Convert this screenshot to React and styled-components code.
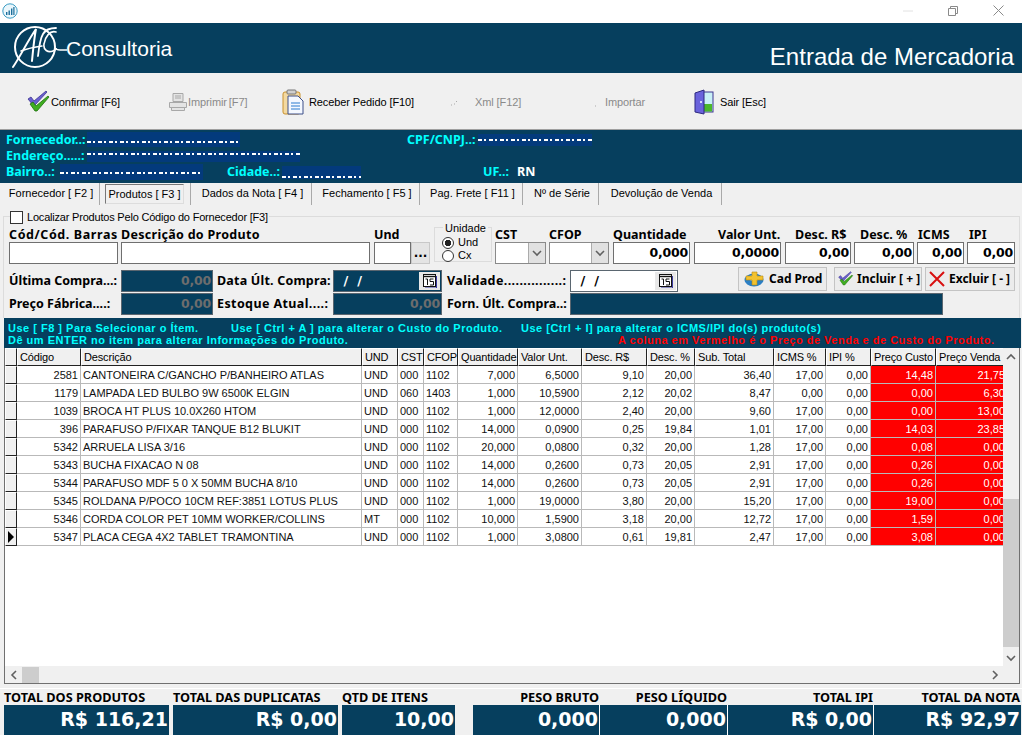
import React from 'react';
import styled, { createGlobalStyle } from 'styled-components';

const NAVY = '#063f5e';
const GRID_COLS = '12px 64px 281px 36px 26px 34px 60px 64px 65px 48px 79px 52px 45px 65px 72px';

const Global = createGlobalStyle`
  html, body { margin: 0; padding: 0; background: #f0f0f0; }
  body { width: 1022px; height: 735px; overflow: hidden; font-family: "Liberation Sans", Arial, sans-serif; }
  * { box-sizing: border-box; }
`;

const Window = styled.div`
  width: 1022px;
  height: 735px;
  display: flex;
  flex-direction: column;
  overflow: hidden;
  & > * { flex: none; }
`;

const TitleBar = styled.div`
  height: 23px;
  background: #fff;
  display: flex;
  align-items: center;
  padding: 0 18px 2px 2px;
`;
const WinButtons = styled.div`
  margin-left: auto;
  display: flex;
  align-items: center;
  gap: 35px;
  color: #999;
`;

const Banner = styled.div`
  height: 50px;
  background: ${NAVY};
  display: flex;
  color: #fff;
  padding: 0 8px 0 11px;
`;
const Brand = styled.div`
  display: flex;
  align-items: flex-start;
  padding-top: 1px;
  font-size: 21px;
  line-height: 49px;
`;
const BrandName = styled.span`
  margin-left: -1px;
`;
const ScreenTitle = styled.div`
  margin-left: auto;
  font-size: 24px;
  line-height: 67px;
`;

const Toolbar = styled.div`
  height: 57px;
  background: #f0f0f0;
  border-bottom: 1px solid #a0a0a0;
  display: grid;
  grid-template-columns: 141px 114px 168px 145px 99px 1fr;
  padding: 2px 0 0 27px;
  align-items: center;
  font-size: 11px;
`;
const ToolButton = styled.div`
  display: flex;
  align-items: center;
  gap: ${p => p.$gap || 0}px;
  color: ${p => (p.$off ? '#8a8a8a' : '#000')};
  letter-spacing: -0.1px;
  word-spacing: ${p => p.$ws || 0}px;
  white-space: pre;
`;

const Supplier = styled.div`
  height: 53px;
  background: ${NAVY};
  padding: 1px 0 0 6px;
  font: bold 12.5px/16px "Noto Sans", Verdana, sans-serif;
  color: #00ffff;
`;
const SupplierRow = styled.div`
  display: flex;
  align-items: center;
  height: ${p => p.$h || 16}px;
  white-space: pre;
`;
const SupLabel = styled.span`
  width: ${p => p.$w}px;
  flex: none;
`;
const Hidden = styled.span`
  flex: none;
  width: ${p => p.$w}px;
  height: ${p => p.$h || 12}px;
  margin-right: ${p => p.$mr || 0}px;
  background-color: #033a7c;
  background-image: repeating-linear-gradient(90deg, #fff 0 4px, transparent 4px 6px, #fff 6px 8px, transparent 8px 11px);
  background-size: 100% 2px;
  background-repeat: no-repeat;
  background-position: 0 ${p => p.$line || 6}px;
`;
const Plain = styled.span`
  color: #fff;
`;

const Tabs = styled.div`
  height: 22px;
  background: #f0f0f0;
  display: flex;
  font-size: 11px;
  color: #000;
`;
const Tab = styled.div`
  width: ${p => p.$w}px;
  display: flex;
  align-items: center;
  justify-content: center;
  padding: 0 0 3px ${p => p.$pl ?? 3}px;
  border-right: 1px solid #a9a9a9;
  white-space: pre;
`;
const ActiveBox = styled.span`
  height: 20px;
  width: 79px;
  margin: 2px 0 0 -1px;
  display: flex;
  align-items: center;
  justify-content: center;
  border: 1px solid;
  border-color: #777 #ddd #ddd #777;
  background: #f0f0f0;
`;

const FormArea = styled.div`
  height: 113px;
  background: #f0f0f0;
  padding: 11px 2px 0 3px;
`;
const FormBox = styled.div`
  height: 102px;
  border: 1px solid #dcdcdc;
  border-bottom: 0;
  padding: 0 0 0 5px;
  position: relative;
`;
const Finder = styled.label`
  position: absolute;
  left: 6px;
  top: -6px;
  display: flex;
  align-items: center;
  gap: 4px;
  background: #f0f0f0;
  font-size: 11px;
  line-height: 13px;
  padding-right: 1px;
  letter-spacing: -0.2px;
`;
const CheckBox = styled.span`
  width: 13px;
  height: 13px;
  background: #fff;
  border: 1px solid #333;
`;

const bold = `font: bold 12.5px/14px "Noto Sans", Verdana, sans-serif;`;

const FieldRow = styled.div`
  display: flex;
  align-items: flex-end;
  height: 47px;
`;
const Field = styled.div`
  width: ${p => p.$w}px;
  margin-right: ${p => p.$mr ?? 3}px;
  flex: none;
`;
const FieldLabel = styled.div`
  ${bold}
  line-height: 16px;
  height: 15px;
  white-space: pre;
  padding-left: ${p => p.$pl || 0}px;
  letter-spacing: ${p => p.$ls || 0}px;
`;
const Input = styled.div`
  height: 22px;
  background: #fff;
  border: 1px solid #6f6f6f;
  font: bold 12.5px/20px "DejaVu Sans", Verdana, sans-serif;
  text-align: right;
  padding-right: 1px;
  letter-spacing: -0.2px;
`;
const DotsButton = styled.div`
  width: 19px;
  height: 22px;
  margin-right: 4px;
  flex: none;
  background: #e4e4e4;
  border: 1px solid #c8c8c8;
  font: bold 12px/20px "DejaVu Sans", sans-serif;
  text-align: center;
`;
const UnitBox = styled.div`
  position: relative;
  width: 58px;
  height: 35px;
  margin: 0 3px 2px 0;
  flex: none;
  border: 1px solid #dcdcdc;
  font-size: 11px;
  padding: 8px 0 0 7px;
`;
const UnitTitle = styled.span`
  position: absolute;
  top: -6px;
  left: 8px;
  background: #f0f0f0;
  padding: 0 2px;
  line-height: 12px;
`;
const Radio = styled.div`
  display: flex;
  align-items: center;
  gap: 4px;
  height: 13px;
  line-height: 13px;
`;
const RadioDot = styled.span`
  width: 12px;
  height: 12px;
  border-radius: 50%;
  border: 1px solid #333;
  background: ${p => (p.$on ? 'radial-gradient(circle, #222 0 3px, #fff 3.5px)' : '#fff')};
`;
const Combo = styled.div`
  height: 22px;
  background: #fff;
  border: 1px solid #8a8a8a;
  display: flex;
  justify-content: flex-end;
`;
const ComboArrow = styled.span`
  width: 17px;
  background: #e1e1e1;
  border-left: 1px solid #ababab;
  display: flex;
  align-items: center;
  justify-content: center;
`;

const Row2 = styled.div`
  display: flex;
  align-items: flex-start;
  height: 23px;
  margin-top: ${p => p.$mt || 0}px;
`;
const RowLabel = styled.div`
  ${bold}
  line-height: 22px;
  width: ${p => p.$w}px;
  padding-left: ${p => p.$pl || 0}px;
  letter-spacing: ${p => p.$ls || 0}px;
  flex: none;
  white-space: pre;
`;
const DarkInput = styled.div`
  width: ${p => p.$w}px;
  height: 22px;
  flex: none;
  background: ${NAVY};
  border: 1px solid #5a6670;
  color: #6d6d6d;
  font: bold 12.5px/20px "DejaVu Sans", Verdana, sans-serif;
  text-align: right;
  padding-right: 1px;
  letter-spacing: -0.2px;
`;
const DateInput = styled.div`
  width: ${p => p.$w}px;
  height: 22px;
  flex: none;
  background: ${p => (p.$dark ? NAVY : '#fff')};
  color: ${p => (p.$dark ? '#fff' : '#000')};
  border: 1px solid #5a6670;
  display: flex;
  align-items: center;
  padding: 0 0 0 5px;
  font: bold 13px/20px "DejaVu Sans", sans-serif;
  white-space: pre;
`;
const CalButton = styled.span`
  margin-left: auto;
  margin-right: 1px;
  width: 21px;
  height: 18px;
  background: #e8e8e8;
  display: flex;
  align-items: center;
  justify-content: center;
`;
const Spacer = styled.span`
  width: ${p => p.$w}px;
  flex: none;
`;
const ActionButton = styled.div`
  width: ${p => p.$w}px;
  height: 24px;
  margin: -3px ${p => p.$mr ?? 3}px 0 0;
  flex: none;
  background: #ececec;
  border: 1px solid #c4c4c4;
  display: flex;
  align-items: center;
  padding-left: ${p => p.$pl || 0}px;
  gap: ${p => p.$gap || 5}px;
  ${bold}
  font-size: 12px;
  white-space: pre;
`;

const Hints = styled.div`
  height: 30px;
  margin: 0 1px 0 4px;
  background: ${NAVY};
  color: #00ffff;
  font: bold 11px/13px "Liberation Sans", Arial, sans-serif;
  padding: 4px 0 0 4px;
  letter-spacing: 0.5px;
  white-space: pre;
`;
const HintRow = styled.div`
  display: flex;
  height: 12px;
`;
const Hint = styled.span`
  width: ${p => p.$w}px;
  flex: none;
  color: ${p => p.$color || 'inherit'};
`;

const GridWrap = styled.div`
  height: 336px;
  margin: 0 2px 0 4px;
  border: 1px solid #707070;
  border-top: 0;
  background: #fff;
  display: flex;
  flex-direction: column;
`;
const GridBody = styled.div`
  flex: 1;
  display: flex;
  min-height: 0;
`;
const GridMain = styled.div`
  width: 998px;
  flex: none;
  overflow: hidden;
`;
const Row = styled.div`
  display: grid;
  grid-template-columns: ${GRID_COLS};
  height: 18px;
`;
const HeadCell = styled.div`
  background: #f0f0f0;
  border-top: 1px solid #fff;
  border-left: 1px solid #fff;
  border-right: 1px solid #222;
  border-bottom: 1px solid #222;
  font-size: 11px;
  line-height: 17px;
  padding-left: 2px;
  white-space: nowrap;
  overflow: hidden;
  letter-spacing: -0.15px;
`;
const Indicator = styled.div`
  background: #f0f0f0;
  border-top: 1px solid #fff;
  border-left: 1px solid #fff;
  border-right: 1px solid #222;
  border-bottom: 1px solid #222;
  display: flex;
  align-items: center;
  justify-content: center;
`;
const Cell = styled.div`
  border-right: 1px solid #b9b9b9;
  border-bottom: 1px solid #b9b9b9;
  background: ${p => (p.$red ? '#ff0000' : '#fff')};
  color: ${p => (p.$red ? '#fff' : '#111')};
  font-size: 11px;
  line-height: 19px;
  padding: 0 2px;
  text-align: ${p => (p.$left ? 'left' : 'right')};
  white-space: nowrap;
  overflow: hidden;
`;
const VScroll = styled.div`
  width: 16px;
  flex: none;
  background: #f0f0f0;
  display: flex;
  flex-direction: column;
  align-items: center;
`;
const ScrollEnd = styled.span`
  height: 17px;
  width: ${p => p.$w || 16}px;
  margin-left: ${p => (p.$end ? 'auto' : 0)};
  flex: none;
  display: flex;
  align-items: center;
  justify-content: center;
`;
const VTrack = styled.div`
  flex: 1;
  width: 100%;
  display: flex;
  flex-direction: column;
  justify-content: flex-end;
`;
const VThumb = styled.div`
  height: 148px;
  margin-bottom: 2px;
  background: #cdcdcd;
`;
const HScroll = styled.div`
  height: 17px;
  background: #f0f0f0;
  display: flex;
  align-items: center;
  padding-right: 16px;
`;
const HThumb = styled.div`
  width: 17px;
  height: 16px;
  background: #cdcdcd;
`;

const Totals = styled.div`
  height: 47px;
  margin-top: 4px;
  background: #f0f0f0;
  border-top: 1px solid #fff;
  display: grid;
  grid-template-columns: 169px 169px 117px 14px 127px 128px 146px 147px;
  padding-left: 4px;
`;
const TotalCol = styled.div`
  margin-right: ${p => p.$mr ?? 4}px;
  display: flex;
  flex-direction: column;
`;
const TotalLabel = styled.div`
  ${bold}
  font-size: 12.7px;
  height: 16px;
  line-height: 16px;
  text-align: ${p => (p.$right ? 'right' : 'left')};
  white-space: nowrap;
  padding-right: ${p => (p.$right ? 1 : 0)}px;
`;
const TotalValue = styled.div`
  height: 30px;
  background: ${NAVY};
  color: #fff;
  font: bold 19px/28px "DejaVu Sans", Verdana, sans-serif;
  text-align: right;
  white-space: nowrap;
  padding-right: 1px;
  border-right: ${p => (p.$sep ? '1px solid #fff' : '0')};
`;

const rows = [
  ['2581', 'CANTONEIRA C/GANCHO P/BANHEIRO ATLAS', 'UND', '000', '1102', '7,000', '6,5000', '9,10', '20,00', '36,40', '17,00', '0,00', '14,48', '21,75'],
  ['1179', 'LAMPADA LED BULBO 9W 6500K ELGIN', 'UND', '060', '1403', '1,000', '10,5900', '2,12', '20,02', '8,47', '0,00', '0,00', '0,00', '6,30'],
  ['1039', 'BROCA HT PLUS 10.0X260 HTOM', 'UND', '000', '1102', '1,000', '12,0000', '2,40', '20,00', '9,60', '17,00', '0,00', '0,00', '13,00'],
  ['396', 'PARAFUSO P/FIXAR TANQUE B12  BLUKIT', 'UND', '000', '1102', '14,000', '0,0900', '0,25', '19,84', '1,01', '17,00', '0,00', '14,03', '23,85'],
  ['5342', 'ARRUELA LISA 3/16', 'UND', '000', '1102', '20,000', '0,0800', '0,32', '20,00', '1,28', '17,00', '0,00', '0,08', '0,00'],
  ['5343', 'BUCHA FIXACAO N 08', 'UND', '000', '1102', '14,000', '0,2600', '0,73', '20,05', '2,91', '17,00', '0,00', '0,26', '0,00'],
  ['5344', 'PARAFUSO MDF 5 0 X 50MM BUCHA 8/10', 'UND', '000', '1102', '14,000', '0,2600', '0,73', '20,05', '2,91', '17,00', '0,00', '0,26', '0,00'],
  ['5345', 'ROLDANA P/POCO 10CM REF:3851 LOTUS PLUS', 'UND', '000', '1102', '1,000', '19,0000', '3,80', '20,00', '15,20', '17,00', '0,00', '19,00', '0,00'],
  ['5346', 'CORDA COLOR PET 10MM WORKER/COLLINS', 'MT', '000', '1102', '10,000', '1,5900', '3,18', '20,00', '12,72', '17,00', '0,00', '1,59', '0,00'],
  ['5347', 'PLACA CEGA 4X2 TABLET TRAMONTINA', 'UND', '000', '1102', '1,000', '3,0800', '0,61', '19,81', '2,47', '17,00', '0,00', '3,08', '0,00'],
];
const heads = ['Código', 'Descrição', 'UND', 'CST', 'CFOP', 'Quantidade', 'Valor Unt.', 'Desc. R$', 'Desc. %', 'Sub. Total', 'ICMS %', 'IPI %', 'Preço Custo', 'Preço Venda'];

const Check = ({ size = 24 }) => (
  <svg width={size} height={size} viewBox="0 0 24 24">
    <path d="M1 9l3-2 3 4L19 1l1 1L8 15H6z" fill="#6a5fd0" stroke="#3c3590" strokeWidth="0.8" />
    <path d="M3 14l3-2 3 4L21 6l1 1L10 21H8z" fill="#3fae20" stroke="#1f6f10" strokeWidth="0.8" />
  </svg>
);

const PrinterIcon = () => (
  <svg width="20" height="20" viewBox="0 0 20 20" fill="#e4e4e4" stroke="#a8a8a8">
    <path d="M5 1.5h10v8H5z" />
    <path d="M7 4h6M7 6h6" />
    <path d="M1.5 10.5h17v5h-17z" />
    <path d="M3.5 15.5h13v3h-13z" />
  </svg>
);

const ClipboardIcon = () => (
  <svg width="22" height="26" viewBox="0 0 22 26">
    <rect x="1" y="3" width="17" height="22" rx="2" fill="#f3d9a0" stroke="#c9912c" />
    <rect x="5" y="1" width="9" height="4" rx="1" fill="#cfcfcf" stroke="#777" />
    <path d="M6 7h10l5 5v13H6z" fill="#f4f8ff" stroke="#3d4f88" />
    <path d="M9 14h9M9 17h9M9 20h9" stroke="#6ea4e0" strokeWidth="1.5" />
  </svg>
);

const DoorIcon = () => (
  <svg width="20" height="26" viewBox="0 0 20 26">
    <rect x="6" y="3" width="13" height="20" fill="#c9f0f6" stroke="#3c3590" />
    <rect x="7" y="15" width="11" height="7.5" fill="#4bb82a" />
    <path d="M1 4l9-3v24l-9-2z" fill="#6a63dc" stroke="#2d2880" />
    <circle cx="7" cy="13" r="1" fill="#fff" />
  </svg>
);

const LogoMark = () => (
  <svg width="56" height="46" viewBox="0 0 56 46" fill="none" stroke="#fff" strokeLinecap="round">
    <circle cx="24" cy="23" r="20" strokeWidth="2" />
    <path d="M2 43C9 33 16 18 25 5c-2 10-3 22-4 32" strokeWidth="2" />
    <path d="M10 27c8-3 14-4 21-5" strokeWidth="1.5" />
    <path d="M27 32c1-9 2-17 5-22 3-5 8-6 13-6" strokeWidth="1.8" />
    <path d="M45 8C39 6 34 13 33 20c-1 6 4 9 9 7 3-1 3-3 3-3 0 2 2 2 4 2h7" strokeWidth="1.6" />
  </svg>
);

const CalIcon = () => (
  <svg width="14" height="14" viewBox="0 0 14 14">
    <rect x="0.5" y="0.5" width="12" height="12" fill="#fff" stroke="#111" />
    <path d="M1 2.5h11" stroke="#111" strokeWidth="1.4" />
    <path d="M2.5 5h2v6M7 5h3.5M7 5v2.5h3.5V11H7" stroke="#111" fill="none" />
    <path d="M13.5 2v12H2" stroke="#3b3ba0" fill="none" />
  </svg>
);

const Chevron = ({ dir = 'down', color = '#606060' }) => {
  const paths = {
    down: 'M1 3l4 4 4-4',
    up: 'M1 7l4-4 4 4',
    left: 'M7 1L3 5l4 4',
    right: 'M3 1l4 4-4 4',
  };
  return (
    <svg width="10" height="10" viewBox="0 0 10 10">
      <path d={paths[dir]} fill="none" stroke={color} strokeWidth="1.6" />
    </svg>
  );
};

export default function App() {
  return (
    <Window>
      <Global />
      <TitleBar>
        <svg width="16" height="16" viewBox="0 0 16 16">
          <circle cx="8" cy="8" r="7.2" fill="#eaf6fb" stroke="#3a9cc4" />
          <path d="M4 12V9h1.4v3zM6.5 12V7.5h1.4V12zM9 12V5.5h1.4V12zM11.3 12V4h1.2v8z" fill="#1c6f9c" />
        </svg>
        <WinButtons>
          <svg width="10" height="10" viewBox="0 0 10 10">
            <path d="M0 5h10" stroke="#e2e2e2" />
          </svg>
          <svg width="10" height="10" viewBox="0 0 10 10" fill="none" stroke="#8a8a8a">
            <path d="M.5 2.5h7v7h-7zM2.5 2.5v-2h7v7h-2" />
          </svg>
          <svg width="11" height="11" viewBox="0 0 11 11" stroke="#8a8a8a">
            <path d="M.5.5l10 10M10.5.5l-10 10" />
          </svg>
        </WinButtons>
      </TitleBar>

      <Banner>
        <Brand>
          <LogoMark />
          <BrandName>Consultoria</BrandName>
        </Brand>
        <ScreenTitle>Entrada de Mercadoria</ScreenTitle>
      </Banner>

      <Toolbar>
        <ToolButton><Check />Confirmar [F6]</ToolButton>
        <ToolButton $off $ws={-2}><PrinterIcon />Imprimir  [F7]</ToolButton>
        <ToolButton $gap={5}><ClipboardIcon />Receber Pedido [F10]</ToolButton>
        <ToolButton $off $gap={16}><svg width="9" height="9" viewBox="0 0 9 9"><path d="M1 7h1M4 6h1M6 4l1-1" stroke="#aaa" /></svg>Xml [F12]</ToolButton>
        <ToolButton $off $gap={8}><svg width="2" height="9" viewBox="0 0 2 9"><path d="M0 8h1" stroke="#aaa" /></svg>Importar</ToolButton>
        <ToolButton $gap={6}><DoorIcon />Sair [Esc]</ToolButton>
      </Toolbar>

      <Supplier>
        <SupplierRow $h={17}>
          <SupLabel $w={81}>Fornecedor..:</SupLabel>
          <Hidden $w={153} $h={15} $line={9} $mr={167} />
          <SupLabel $w={71}>CPF/CNPJ..:</SupLabel>
          <Hidden $w={114} $h={12} $line={5} />
        </SupplierRow>
        <SupplierRow>
          <SupLabel $w={81}>Endereço.....:</SupLabel>
          <Hidden $w={213} $h={11} $line={2} />
        </SupplierRow>
        <SupplierRow>
          <SupLabel $w={54}>Bairro..:</SupLabel>
          <Hidden $w={143} $h={16} $line={8} $mr={24} />
          <SupLabel $w={55}>Cidade..:</SupLabel>
          <Hidden $w={79} $h={13} $line={10} $mr={122} />
          <SupLabel $w={34}>UF..:</SupLabel>
          <Plain>RN</Plain>
        </SupplierRow>
      </Supplier>

      <Tabs>
        <Tab $w={100}>Fornecedor [ F2 ]</Tab>
        <Tab $w={91} $pl={0}><ActiveBox>Produtos [ F3 ]</ActiveBox></Tab>
        <Tab $w={121}>Dados da Nota [ F4 ]</Tab>
        <Tab $w={108}>Fechamento [ F5 ]</Tab>
        <Tab $w={103}>Pag. Frete [ F11 ]</Tab>
        <Tab $w={76}>Nº de Série</Tab>
        <Tab $w={123}>Devolução de Venda</Tab>
      </Tabs>

      <FormArea>
        <FormBox>
          <Finder><CheckBox />Localizar Produtos Pelo Código do Fornecedor [F3]</Finder>
          <FieldRow>
            <Field $w={109}><FieldLabel $ls={0.6}>Cód/Cód. Barras</FieldLabel><Input /></Field>
            <Field $w={249} $mr={4}><FieldLabel $ls={0.3}>Descrição do Produto</FieldLabel><Input /></Field>
            <Field $w={37} $mr={0}><FieldLabel>Und</FieldLabel><Input /></Field>
            <DotsButton>...</DotsButton>
            <UnitBox>
              <UnitTitle>Unidade</UnitTitle>
              <Radio><RadioDot $on />Und</Radio>
              <Radio><RadioDot />Cx</Radio>
            </UnitBox>
            <Field $w={51}>
              <FieldLabel>CST</FieldLabel>
              <Combo><ComboArrow><Chevron /></ComboArrow></Combo>
            </Field>
            <Field $w={60} $mr={4}>
              <FieldLabel>CFOP</FieldLabel>
              <Combo><ComboArrow><Chevron /></ComboArrow></Combo>
            </Field>
            <Field $w={77} $mr={4}><FieldLabel>Quantidade</FieldLabel><Input>0,000</Input></Field>
            <Field $w={87} $mr={4}><FieldLabel $pl={24}>Valor Unt.</FieldLabel><Input>0,0000</Input></Field>
            <Field $w={66}><FieldLabel $pl={10}>Desc. R$</FieldLabel><Input>0,00</Input></Field>
            <Field $w={60}><FieldLabel $pl={6}>Desc. %</FieldLabel><Input>0,00</Input></Field>
            <Field $w={47}><FieldLabel $pl={1}>ICMS</FieldLabel><Input>0,00</Input></Field>
            <Field $w={48} $mr={0}><FieldLabel $pl={2}>IPI</FieldLabel><Input>0,00</Input></Field>
          </FieldRow>
          <Row2 $mt={6}>
            <RowLabel $w={112}>Última Compra...:</RowLabel>
            <DarkInput $w={92}>0,00</DarkInput>
            <RowLabel $w={120} $pl={4} $ls={0.2}>Data Últ. Compra:</RowLabel>
            <DateInput $w={109} $dark> /  /<CalButton><CalIcon /></CalButton></DateInput>
            <RowLabel $w={128} $pl={5} $ls={0.4}>Validade...............:</RowLabel>
            <DateInput $w={108}> /  /<CalButton><CalIcon /></CalButton></DateInput>
            <Spacer $w={60} />
            <ActionButton $w={89} $mr={7} $pl={5} $gap={4}>
              <svg width="21" height="16" viewBox="0 0 21 16">
                <ellipse cx="10" cy="9" rx="9.5" ry="6.5" fill="#2b7fc4" />
                <ellipse cx="10" cy="7" rx="6" ry="3" fill="#a7d3f2" />
                <path d="M8 1h5v4h6v4h-6v5H8V9H2V5h6z" fill="#f2c230" stroke="#b88a10" strokeWidth="0.6" />
              </svg>
              Cad Prod
            </ActionButton>
            <ActionButton $w={88} $pl={3} $gap={3}><Check size={16} />Incluir [ + ]</ActionButton>
            <ActionButton $w={90} $mr={0} $pl={3} $gap={4}>
              <svg width="16" height="16" viewBox="0 0 16 16" stroke="#d81010" strokeWidth="2">
                <path d="M1 1l14 14M15 1L1 15" />
              </svg>
              Excluir [ - ]
            </ActionButton>
          </Row2>
          <Row2>
            <RowLabel $w={112}>Preço Fábrica....:</RowLabel>
            <DarkInput $w={92}>0,00</DarkInput>
            <RowLabel $w={120} $pl={4} $ls={0.4}>Estoque Atual....:</RowLabel>
            <DarkInput $w={109}>0,00</DarkInput>
            <RowLabel $w={128} $pl={5}>Forn. Últ. Compra..:</RowLabel>
            <DarkInput $w={373} />
          </Row2>
        </FormBox>
      </FormArea>

      <Hints>
        <HintRow>
          <Hint $w={223}>Use [ F8 ] Para Selecionar o Ítem.</Hint>
          <Hint $w={290}>Use [ Ctrl + A ] para alterar o Custo do Produto.</Hint>
          <Hint>Use [Ctrl + I] para alterar o ICMS/IPI do(s) produto(s)</Hint>
        </HintRow>
        <HintRow>
          <Hint $w={610}>Dê um ENTER no item para alterar Informações do Produto.</Hint>
          <Hint $color="#ff0000">A coluna em Vermelho é o Preço de Venda e de Custo do Produto.</Hint>
        </HintRow>
      </Hints>

      <GridWrap>
        <GridBody>
          <GridMain>
            <Row>
              <Indicator />
              {heads.map(h => <HeadCell key={h}>{h}</HeadCell>)}
            </Row>
            {rows.map((r, i) => (
              <Row key={r[0]}>
                <Indicator>
                  {i === rows.length - 1 && (
                    <svg width="8" height="12" viewBox="0 0 8 12"><path d="M1 0l6 6-6 6z" fill="#000" /></svg>
                  )}
                </Indicator>
                {r.map((v, j) => (
                  <Cell key={j} $left={j >= 1 && j <= 4} $red={j >= 12}>{v}</Cell>
                ))}
              </Row>
            ))}
          </GridMain>
          <VScroll>
            <ScrollEnd><Chevron dir="up" /></ScrollEnd>
            <VTrack><VThumb /></VTrack>
            <ScrollEnd><Chevron dir="down" /></ScrollEnd>
          </VScroll>
        </GridBody>
        <HScroll>
          <ScrollEnd $w={17}><Chevron dir="left" /></ScrollEnd>
          <HThumb />
          <ScrollEnd $w={17} $end><Chevron dir="right" /></ScrollEnd>
        </HScroll>
      </GridWrap>

      <Totals>
        <TotalCol><TotalLabel>TOTAL DOS PRODUTOS</TotalLabel><TotalValue>R$ 116,21</TotalValue></TotalCol>
        <TotalCol><TotalLabel>TOTAL DAS DUPLICATAS</TotalLabel><TotalValue>R$ 0,00</TotalValue></TotalCol>
        <TotalCol><TotalLabel>QTD DE ITENS</TotalLabel><TotalValue>10,00</TotalValue></TotalCol>
        <span />
        <TotalCol $mr={0}><TotalLabel $right>PESO BRUTO</TotalLabel><TotalValue $sep>0,000</TotalValue></TotalCol>
        <TotalCol $mr={0}><TotalLabel $right>PESO LÍQUIDO</TotalLabel><TotalValue $sep>0,000</TotalValue></TotalCol>
        <TotalCol $mr={0}><TotalLabel $right>TOTAL IPI</TotalLabel><TotalValue $sep>R$ 0,00</TotalValue></TotalCol>
        <TotalCol $mr={0}><TotalLabel $right>TOTAL DA NOTA</TotalLabel><TotalValue>R$ 92,97</TotalValue></TotalCol>
      </Totals>
    </Window>
  );
}
